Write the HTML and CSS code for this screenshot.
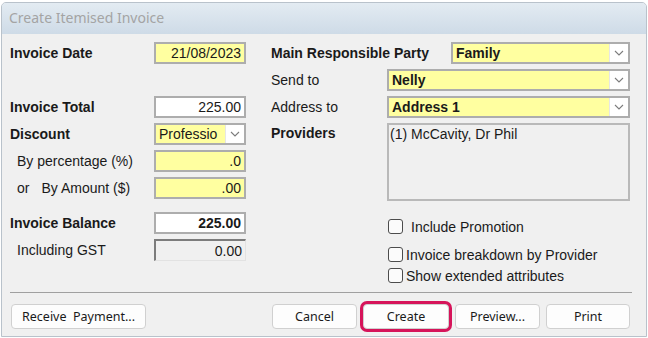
FILE: index.html
```html
<!DOCTYPE html>
<html lang="en">
<head>
    <meta charset="UTF-8">
    <title>Create Itemised Invoice</title>
    <link rel="stylesheet" href="styles.css">
</head>
<body>
    <div class="window">
        <div class="titlebar">Create Itemised Invoice</div>

        <div class="form">
            <div class="col col-left">
                <div class="row">
                    <label class="lbl bold">Invoice Date</label>
                    <div class="field yellow num">21/08/2023</div>
                </div>
                <div class="row"></div>
                <div class="row">
                    <label class="lbl bold">Invoice Total</label>
                    <div class="field num">225.00</div>
                </div>
                <div class="row">
                    <label class="lbl bold">Discount</label>
                    <div class="field select yellow">
                        <span class="value">Professio</span>
                        <span class="drop"><svg width="10" height="6" viewBox="0 0 10 6"><path d="M1 1 L5 5 L9 1" fill="none" stroke="#7d7d7d" stroke-width="1.1"/></svg></span>
                    </div>
                </div>
                <div class="row">
                    <label class="lbl sub">By percentage (%)</label>
                    <div class="field yellow num">.0</div>
                </div>
                <div class="row">
                    <label class="lbl sub"><span class="or">or</span>By Amount ($)</label>
                    <div class="field yellow num">.00</div>
                </div>
                <div class="row spaced">
                    <label class="lbl bold">Invoice Balance</label>
                    <div class="field num bold">225.00</div>
                </div>
                <div class="row">
                    <label class="lbl sub">Including GST</label>
                    <div class="field readonly num">0.00</div>
                </div>
            </div>

            <div class="col col-right">
                <div class="row row-wide">
                    <label class="lbl bold">Main Responsible Party</label>
                    <div class="field select yellow">
                        <span class="value bold">Family</span>
                        <span class="drop"><svg width="10" height="6" viewBox="0 0 10 6"><path d="M1 1 L5 5 L9 1" fill="none" stroke="#7d7d7d" stroke-width="1.1"/></svg></span>
                    </div>
                </div>
                <div class="row">
                    <label class="lbl">Send to</label>
                    <div class="field select yellow">
                        <span class="value bold">Nelly</span>
                        <span class="drop"><svg width="10" height="6" viewBox="0 0 10 6"><path d="M1 1 L5 5 L9 1" fill="none" stroke="#7d7d7d" stroke-width="1.1"/></svg></span>
                    </div>
                </div>
                <div class="row">
                    <label class="lbl">Address to</label>
                    <div class="field select yellow">
                        <span class="value bold">Address 1</span>
                        <span class="drop"><svg width="10" height="6" viewBox="0 0 10 6"><path d="M1 1 L5 5 L9 1" fill="none" stroke="#7d7d7d" stroke-width="1.1"/></svg></span>
                    </div>
                </div>
                <div class="row row-list">
                    <label class="lbl bold">Providers</label>
                    <div class="listbox">(1) McCavity, Dr Phil</div>
                </div>

                <div class="checks">
                    <div class="check first"><span class="box"></span><span class="check-text wide">Include Promotion</span></div>
                    <div class="check second"><span class="box"></span><span class="check-text">Invoice breakdown by Provider</span></div>
                    <div class="check third"><span class="box"></span><span class="check-text">Show extended attributes</span></div>
                </div>
            </div>
        </div>

        <div class="footer">
            <button class="btn btn-wide">Receive&nbsp;&nbsp;Payment...</button>
            <div class="actions">
                <button class="btn">Cancel</button>
                <button class="btn btn-focus">Create</button>
                <button class="btn">Preview...</button>
                <button class="btn btn-print">Print</button>
            </div>
        </div>
    </div>
</body>
</html>
```

FILE: styles.css
```css
* {
    margin: 0;
    padding: 0;
    box-sizing: border-box;
}

body {
    font-family: 'Liberation Sans', Arial, sans-serif;
    font-size: 14px;
    color: #1a1a1a;
    background: #ffffff;
    width: 648px;
    height: 338px;
    overflow: hidden;
}

.window {
    margin: 2px 0 0 1px;
    width: 646px;
    height: 335px;
    border: 1px solid #b9c2cb;
    border-radius: 5px 5px 0 0;
    background: #f0f0f0;
    display: flex;
    flex-direction: column;
    overflow: hidden;
}

.titlebar {
    height: 31px;
    flex-shrink: 0;
    background: linear-gradient(#e3ebf2, #cedbe7);
    color: #a4a4a4;
    font-family: 'Noto Sans', sans-serif;
    font-size: 14px;
    padding: 5px 0 0 7px;
}

.form {
    flex: 1;
    display: flex;
    padding: 8px 0 0 8px;
}

.col {
    display: flex;
    flex-direction: column;
    gap: 5px;
}

.col-left {
    width: 236px;
}

.col-right {
    width: 360px;
    margin-left: 25px;
}

.row {
    display: flex;
    align-items: center;
    height: 22px;
}

.row.spaced {
    margin-top: 8px;
}

.bold {
    font-weight: bold;
}

.lbl {
    flex-shrink: 0;
    white-space: nowrap;
}

.col-left .lbl {
    width: 144px;
}

.lbl.sub {
    padding-left: 7px;
}

.or {
    margin-right: 12px;
}

.col-right .lbl {
    width: 116px;
}

.col-right .row-wide .lbl {
    width: 180px;
}

.field {
    width: 92px;
    height: 22px;
    border: 2px solid #adadad;
    background: #ffffff;
    display: flex;
    align-items: center;
    padding: 0 3px;
    white-space: nowrap;
}

.col-right .field {
    width: 243px;
}

.col-right .row-wide .field {
    width: 179px;
}

.num {
    justify-content: flex-end;
}

.yellow {
    background: #ffffa0;
}

.readonly {
    background: #f0f0f0;
    border-width: 2px 1px 1px 2px;
    border-color: #7c7c7c #e2e2e2 #e2e2e2 #7c7c7c;
}

.select {
    padding: 0 0 0 3px;
}

.select .value {
    flex: 1;
    overflow: hidden;
}

.drop {
    width: 19px;
    height: 100%;
    flex-shrink: 0;
    background: #ffffff;
    border-left: 1px solid #e6e6e6;
    display: flex;
    align-items: center;
    justify-content: center;
}

.row-list {
    height: 78px;
    align-items: flex-start;
}

.row-list .lbl {
    padding-top: 2px;
}

.listbox {
    width: 243px;
    height: 78px;
    border: 2px solid #b9b9b9;
    background: #f0f0f0;
    padding: 1px 1px;
}

.checks {
    display: flex;
    flex-direction: column;
    margin-left: 117px;
}

.check {
    display: flex;
    align-items: center;
    height: 15px;
}

.check.first {
    margin-top: 13px;
}

.check.second {
    margin-top: 13px;
}

.check.third {
    margin-top: 6px;
}

.box {
    width: 15px;
    height: 15px;
    border: 1.5px solid #4c4c4c;
    border-radius: 3px;
    background: #fbfbfb;
}

.check-text {
    margin-left: 3px;
}

.check-text.wide {
    margin-left: 8px;
}

.footer {
    flex-shrink: 0;
    height: 44px;
    margin: 0 14px 0 8px;
    border-top: 1px solid #a0a0a0;
    padding: 11px 2px 0 1px;
    display: flex;
    align-items: flex-start;
}

.btn {
    width: 85px;
    height: 25px;
    background: #fdfdfd;
    border: 1px solid #d0d0d0;
    border-radius: 4px;
    font-family: 'Noto Sans', sans-serif;
    font-size: 12.5px;
    color: #1a1a1a;
}

.btn-wide {
    width: 135px;
}

.btn-print {
    width: 84px;
}

.actions {
    margin-left: auto;
    display: flex;
    gap: 6px;
}

.btn-focus {
    width: 86px;
    box-shadow: 0 0 0 3px #d6145a;
}
```
